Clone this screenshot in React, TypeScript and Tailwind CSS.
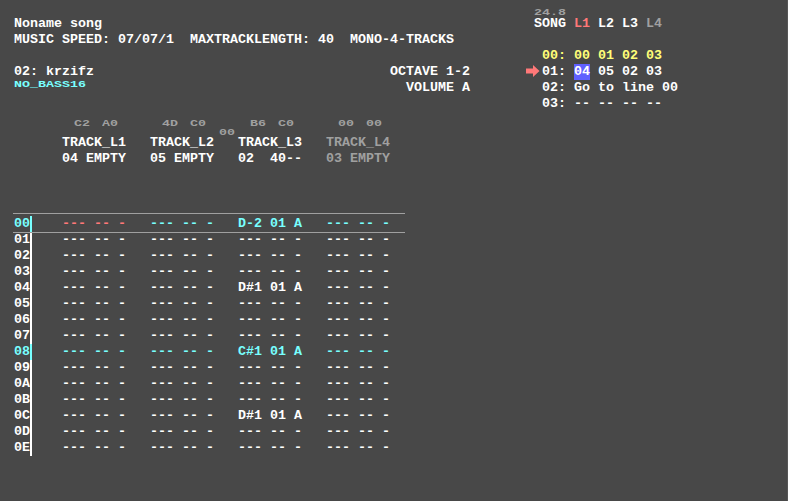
import React from "react";

const CYAN = "text-[#78ffff]";
const RED = "text-[#ff7878]";
const GRAY = "text-[#a0a0a0]";

function Small({ children, className = "" }: { children: React.ReactNode; className?: string }) {
  return (
    <span className={`inline-block origin-top-left scale-y-[0.65] leading-none whitespace-pre ${className}`}>
      {children}
    </span>
  );
}

type Cell = { t: string; c: string };

const hex = (n: number) => n.toString(16).toUpperCase().padStart(2, "0");
const EMPTY = "--- -- -";

const rows: { num: string; numC: string; barC: string; cells: Cell[] }[] = Array.from({ length: 15 }, (_, i) => {
  const hl = i === 0 || i === 8;
  const base = hl ? CYAN : "text-white";
  const cells: Cell[] = [0, 1, 2, 3].map(() => ({ t: EMPTY, c: base }));
  if (i === 0) {
    cells[0].c = RED;
    cells[2].t = "D-2 01 A";
  }
  if (i === 4 || i === 12) cells[2].t = "D#1 01 A";
  if (i === 8) cells[2].t = "C#1 01 A";
  return {
    num: hex(i),
    numC: hl ? CYAN : "text-white",
    barC: hl ? "bg-[#78ffff]" : "bg-white",
    cells,
  };
});

const tracks = [
  { a: "C2", b: "A0", name: "TRACK_L1", info: "04 EMPTY", c: "text-white" },
  { a: "4D", b: "C0", name: "TRACK_L2", info: "05 EMPTY", c: "text-white" },
  { a: "B6", b: "C0", name: "TRACK_L3", info: "02  40--", c: "text-white" },
  { a: "00", b: "00", name: "TRACK_L4", info: "03 EMPTY", c: GRAY },
];

function Arrow() {
  return (
    <svg width="14" height="12" viewBox="0 0 14 12" className="mt-px">
      <path d="M0 3.5 H7 V0 L13.5 6 L7 12 V8.5 H0 Z" fill="#ff7878" />
    </svg>
  );
}

export default function App() {
  return (
    <div className="w-[788px] h-[501px] bg-[#484848] overflow-hidden font-['Liberation_Mono',monospace] font-bold text-[13.333px] leading-4 text-white flex flex-col border-r border-[#565656]">
      {/* top section */}
      <div className="flex h-[112px]">
        <div className="w-[470px] pl-[14px] pt-4 flex flex-col">
          <div className="h-4 whitespace-pre">Noname song</div>
          <div className="h-4 whitespace-pre">MUSIC SPEED: 07/07/1  MAXTRACKLENGTH: 40  MONO-4-TRACKS</div>
          <div className="h-4" />
          <div className="h-4 flex justify-between whitespace-pre">
            <span>02: krzifz</span>
            <span>OCTAVE 1-2</span>
          </div>
          <div className="h-4 flex justify-between whitespace-pre">
            <Small className={CYAN}>NO_BASS16</Small>
            <span>VOLUME A</span>
          </div>
        </div>
        <div className="ml-[56px] flex flex-col">
          <div className="h-4 pl-2 pt-[7px]">
            <Small className={GRAY}>24.8</Small>
          </div>
          <div className="h-4 pl-2 whitespace-pre">
            SONG <span className={RED}>L1</span> L2 L3 <span className={GRAY}>L4</span>
          </div>
          <div className="h-4" />
          <div className="h-4 flex">
            <span className="w-4" />
            <span className="whitespace-pre text-[#ffff78]">00: 00 01 02 03</span>
          </div>
          <div className="h-4 flex">
            <span className="w-4 flex items-start">
              <Arrow />
            </span>
            <span className="whitespace-pre">
              01: <span className="inline-block h-4 bg-[#6060ff]">04</span> 05 02 03
            </span>
          </div>
          <div className="h-4 flex">
            <span className="w-4" />
            <span className="whitespace-pre">02: Go to line 00</span>
          </div>
          <div className="h-4 flex">
            <span className="w-4" />
            <span className="whitespace-pre">03: -- -- -- --</span>
          </div>
        </div>
      </div>

      {/* track header */}
      <div className="pl-[62px] flex flex-col">
        <div className="mt-[7px] h-2 flex">
          {tracks.map((t) => (
            <div key={t.name} className="w-[88px] flex pl-3 gap-[12px]">
              <Small className={GRAY}>{t.a}</Small>
              <Small className={GRAY}>{t.b}</Small>
            </div>
          ))}
        </div>
        <div className="h-2 pl-[157px]">
          <Small className={GRAY}>00</Small>
        </div>
        <div className="flex h-4">
          {tracks.map((t) => (
            <div key={t.name} className={`w-[88px] whitespace-pre ${t.c}`}>
              {t.name}
            </div>
          ))}
        </div>
        <div className="flex h-4">
          {tracks.map((t) => (
            <div key={t.name} className={`w-[88px] whitespace-pre ${t.c}`}>
              {t.info}
            </div>
          ))}
        </div>
      </div>

      {/* tracker rows */}
      <div className="mt-[49px] flex flex-col">
        {rows.map((r, i) => (
          <div key={r.num} className="relative flex h-4 pl-[14px]">
            {i === 0 && (
              <>
                <div className="absolute left-[13px] w-[392px] -top-[3px] h-px bg-[#a0a0a0]" />
                <div className="absolute left-[13px] w-[392px] top-4 h-px bg-[#a0a0a0] z-10" />
              </>
            )}
            <span className={`w-4 whitespace-pre ${r.numC}`}>{r.num}</span>
            <span className={`w-[2px] h-4 ${r.barC}`} />
            <div className="ml-[30px] flex">
              {r.cells.map((c, j) => (
                <span key={j} className={`w-[88px] whitespace-pre ${c.c}`}>
                  {c.t}
                </span>
              ))}
            </div>
          </div>
        ))}
      </div>
    </div>
  );
}
